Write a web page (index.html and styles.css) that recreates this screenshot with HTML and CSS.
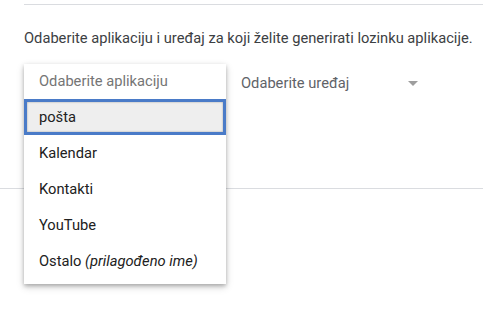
FILE: index.html
```html
<!DOCTYPE html>
<html lang="hr">
<head>
  <meta charset="UTF-8">
  <title>Lozinke aplikacija</title>
  <link rel="stylesheet" href="styles.css">
</head>
<body>

<div class="card">
  <div class="section">
    <p class="intro">Odaberite aplikaciju i uređaj za koji želite generirati lozinku aplikacije.</p>

    <div class="selects">
      <div class="select-wrap">
        <ul class="menu">
          <li class="placeholder">Odaberite aplikaciju</li>
          <li class="selected">pošta</li>
          <li>Kalendar</li>
          <li>Kontakti</li>
          <li>YouTube</li>
          <li>Ostalo <em>(prilagođeno ime)</em></li>
        </ul>
      </div>
      <div class="select device">
        <span>Odaberite uređaj</span>
        <span class="arrow"></span>
      </div>
    </div>
  </div>
</div>

</body>
</html>
```

FILE: styles.css
```css
html {
  height: 100%;
}
body {
  margin: 0;
  min-height: 100%;
  padding-top: 1px;
  box-sizing: border-box;
  font-family: Roboto, "Noto Sans", Arial, sans-serif;
  font-size: 14.7px;
  color: #202124;
  background: #fff;
}
.card {
  margin: -31px 0 0 -8px;
  width: calc(100% + 8px);
  height: 219px;
  border: 1px solid #dadce0;
  border-top: none;
  border-right: none;
  border-radius: 0 0 0 8px;
  box-sizing: border-box;
  padding: 34px 0 0 31px;
}
.section {
  border-top: 1px solid #dadce0;
}
.intro {
  margin: 23px 0 0;
  line-height: 20px;
  color: #3c4043;
}
.selects {
  display: flex;
  margin-top: 17px;
}
.select-wrap {
  position: relative;
  width: 202px;
  height: 36px;
}
.select {
  height: 36px;
  line-height: 36px;
}
.device {
  display: flex;
  align-items: center;
  width: 177px;
  margin-left: 15px;
  color: #5f6368;
}
.arrow {
  margin-left: auto;
  width: 0;
  height: 0;
  border-left: 5px solid transparent;
  border-right: 5px solid transparent;
  border-top: 5px solid #9e9e9e;
}
.menu {
  position: absolute;
  top: -1px;
  left: 0;
  z-index: 2;
  width: 202px;
  margin: 0;
  padding: 0 0 5px;
  list-style: none;
  background: #fff;
  box-shadow: 0 2px 4px rgba(0, 0, 0, .25), 0 3px 8px rgba(0, 0, 0, .15);
}
.menu li {
  height: 36px;
  line-height: 36px;
  padding-left: 15px;
  color: #212121;
}
.menu .placeholder {
  height: 35px;
  line-height: 35px;
  color: #757575;
}
.menu .selected {
  box-sizing: border-box;
  padding-left: 12px;
  line-height: 30px;
  background: #eeeeee;
  border: 3px solid #4a7bc8;
  box-shadow: inset 0 0 2px rgba(0, 0, 0, .35);
}
.menu em {
  font-style: italic;
}
```
